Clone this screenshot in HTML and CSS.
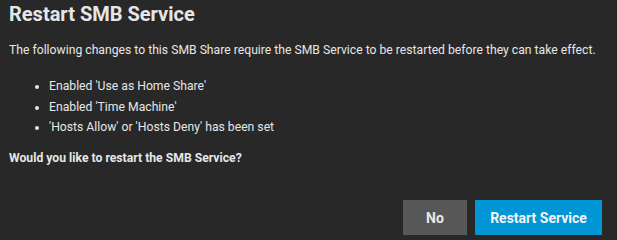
FILE: index.html
```html
<!DOCTYPE html>
<html>
<head>
    <meta charset="UTF-8">
    <title>Restart SMB Service</title>
    <link rel="stylesheet" href="styles.css">
</head>
<body>
    <div class="dialog">
        <h1 class="dialog-title">Restart SMB Service</h1>
        <div class="dialog-content">
            <p>The following changes to this SMB Share require the SMB Service to be restarted before they can take effect.</p>
            <ul class="changes">
                <li>Enabled 'Use as Home Share'</li>
                <li>Enabled 'Time Machine'</li>
                <li>'Hosts Allow' or 'Hosts Deny' has been set</li>
            </ul>
            <p class="question">Would you like to restart the SMB Service?</p>
        </div>
        <div class="dialog-actions">
            <button class="btn btn-default">No</button>
            <button class="btn btn-primary">Restart Service</button>
        </div>
    </div>
</body>
</html>
```

FILE: styles.css
```css
html {
    font-family: Roboto, "Noto Sans", sans-serif;
    box-sizing: border-box;
}

*,
*:before,
*:after {
    box-sizing: inherit;
}

body {
    margin: 0;
    width: 617px;
    height: 240px;
    overflow: hidden;
    background-color: #282828;
    color: #e6e6e6;
}

.dialog {
    display: flex;
    flex-direction: column;
    height: 100%;
    padding: 0 15px 5px 9px;
}

.dialog-title {
    margin: 0;
    padding-top: 1px;
    font-size: 20px;
    line-height: 26px;
    font-weight: 700;
}

.dialog-content {
    font-size: 12.2px;
    flex: 1;
}

.dialog-content p {
    margin: 14px 0 0;
    line-height: 18px;
    white-space: nowrap;
}

.changes {
    margin: 17px 0 0;
    padding-left: 40px;
}

.changes li {
    line-height: 20.5px;
}

.dialog-content .question {
    margin-top: 11px;
    font-weight: 700;
}

.dialog-actions {
    display: flex;
    justify-content: flex-end;
    gap: 8px;
}

.btn {
    font-family: inherit;
    font-size: 14px;
    font-weight: 700;
    height: 35px;
    border: none;
    border-radius: 0;
    color: #e8e8e8;
    padding: 0;
    white-space: nowrap;
}

.btn-default {
    background-color: #575757;
    width: 64px;
}

.btn-primary {
    background-color: #0095d5;
    width: 127px;
    color: #f4f4f4;
}
```
